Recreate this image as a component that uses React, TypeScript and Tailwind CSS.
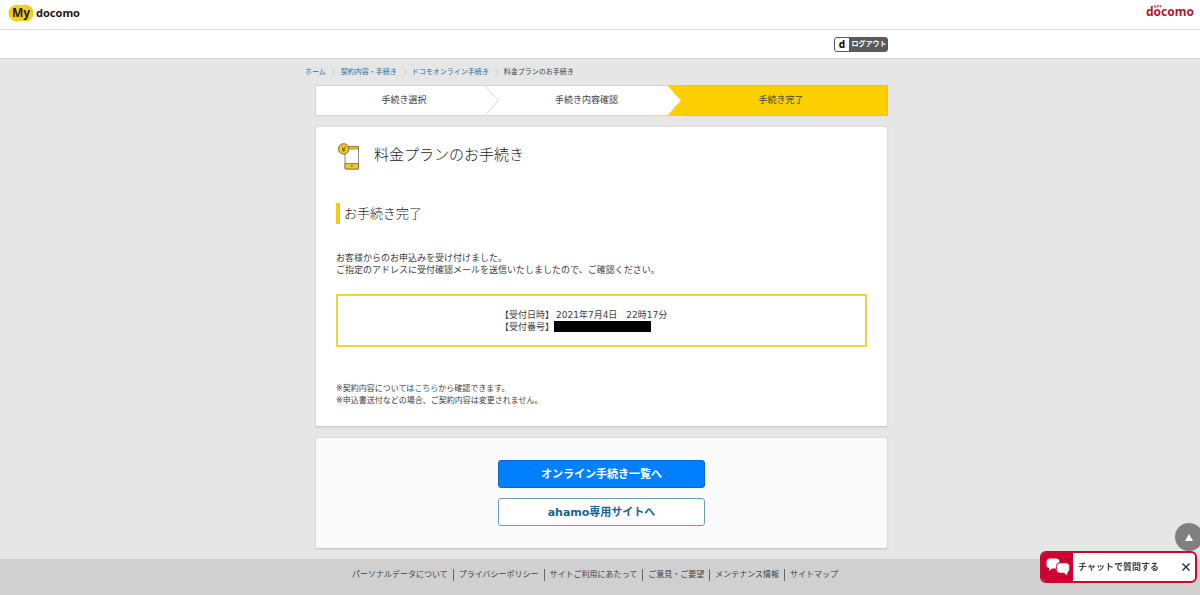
import type { ReactNode } from "react";

const breadcrumbs = ["ホーム", "契約内容・手続き", "ドコモオンライン手続き"];

const footerLinks = [
  "パーソナルデータについて",
  "プライバシーポリシー",
  "サイトご利用にあたって",
  "ご意見・ご要望",
  "メンテナンス情報",
  "サイトマップ",
];

export default function App() {
  return (
    <div className="flex min-h-screen flex-col overflow-x-hidden bg-[#e6e6e6] font-['DejaVu_Sans','Noto_Sans_CJK_JP',sans-serif] text-[#404040]">
      <SiteHeader />
      <main className="w-full grow pb-[10px] pl-[3px]">
        <div className="mx-auto max-w-[573px]">
          <Breadcrumb />
          <Steps />
          <ProcedureCard />
          <ActionCard />
        </div>
      </main>
      <SiteFooter />
      <FloatingTools />
    </div>
  );
}

function SiteHeader() {
  return (
    <header className="bg-white">
      <div className="flex h-[30px] items-start justify-between border-b border-[#dedede] pl-2 pr-[6px]">
        <a href="#" className="flex items-center pt-1 font-['Noto_Sans',sans-serif] font-bold text-[#231815]">
          <span className="relative flex h-[18px] w-[26px] items-center justify-center">
            <svg viewBox="0 0 26 18" className="absolute inset-0 h-full w-full" aria-hidden="true">
              <circle cx="9" cy="9" r="8.6" fill="#f5cc1c" />
              <circle cx="17" cy="9" r="8.6" fill="#f5cc1c" />
            </svg>
            <span className="relative text-xs leading-[18px]">My</span>
          </span>
          <span className="ml-[2px] text-[11px] leading-[18px]">docomo</span>
        </a>
        <a href="#" className="relative pt-1 font-['Noto_Sans',sans-serif] text-xs font-bold leading-4 text-[#b3162f]">
          <svg viewBox="0 0 8 3" className="absolute left-2 top-[5px] h-[3px] w-2" fill="none" stroke="#b3162f" strokeWidth="0.7" aria-hidden="true">
            <path d="M0.5 2.6V0.5L2 2.6V0.5M3 0.7H5M4 0.7V2.6M5.6 0.7H7.6M6.6 0.7V2.6" />
          </svg>
          docomo
        </a>
      </div>
      <div className="h-[29px] border-b border-[#d4d4d4] pl-[3px]">
        <div className="mx-auto flex max-w-[573px] justify-end pt-[7px]">
          <button type="button" className="flex h-[15px] w-[54px] items-center overflow-hidden rounded-[3px] border border-[#5a5a5a] bg-[#5a5a5a] text-[7px] font-bold leading-[15px] text-white">
            <span className="w-[14px] bg-white font-['Noto_Sans',sans-serif] text-[10px] leading-[13px] text-black">d</span>
            <span className="grow whitespace-nowrap pl-[2px]">ログアウト</span>
          </button>
        </div>
      </div>
    </header>
  );
}

function Breadcrumb() {
  return (
    <nav className="-ml-[10px] flex h-[26px] items-center gap-[5px] whitespace-nowrap text-[7px] leading-3">
      {breadcrumbs.map((label) => (
        <span key={label} className="flex items-center gap-[5px]">
          <a href="#" className="text-[#1a6fa5]">{label}</a>
          <svg viewBox="0 0 5 8" className="h-2 w-[5px]" fill="none" stroke="#c4c4c4" strokeWidth="0.8" aria-hidden="true">
            <path d="M1 0.5L4 4L1 7.5" />
          </svg>
        </span>
      ))}
      <span>料金プランのお手続き</span>
    </nav>
  );
}

function Steps() {
  return (
    <ol className="grid h-[31px] grid-cols-[177fr_182fr_214fr] text-center text-[9px] leading-[29px]">
      <li className="border-y border-l border-[#d4d4d4] bg-white">手続き選択</li>
      <li className="relative border-y border-[#d4d4d4] bg-white pl-[7px]">
        <svg viewBox="0 0 14 29" className="absolute -left-[7px] top-0 h-[29px] w-[14px]" fill="none" stroke="#d8d8d8" aria-hidden="true">
          <path d="M0 0L13.5 14.5L0 29" />
        </svg>
        手続き内容確認
      </li>
      <li className="relative border border-[#d9c14a] bg-[#fcd000]">
        <svg viewBox="0 0 15 31" className="absolute -left-2 -top-px h-[31px] w-[15px]" aria-hidden="true">
          <path d="M0 0H15V31H0L14 15.5Z" fill="#fcd000" />
          <path d="M0 1L14 15.5L0 30Z" fill="#fff" />
        </svg>
        手続き完了
      </li>
    </ol>
  );
}

function Card({ className, children }: { className: string; children: ReactNode }) {
  return (
    <section className={`mt-[10px] rounded-[3px] border border-[#dcdcdc] border-b-[#cacaca] shadow-xs ${className}`}>
      {children}
    </section>
  );
}

function ProcedureCard() {
  return (
    <Card className="bg-white px-5 pb-[19px] pt-4">
      <div className="flex items-start">
        <PlanIcon />
        <h1 className="ml-3 text-[15px] font-light leading-6 text-[#222]">料金プランのお手続き</h1>
      </div>
      <h2 className="mt-8 border-l-4 border-[#f2cb13] pl-1 text-[13px] font-light leading-[21px] text-[#222]">お手続き完了</h2>
      <p className="mt-7 text-[9px] leading-3">
        お客様からのお申込みを受け付けました。
        <br />
        ご指定のアドレスに受付確認メールを送信いたしましたので、ご確認ください。
      </p>
      <dl className="mt-[18px] flex h-[53px] flex-col justify-center border-2 border-[#ecd63f] pl-[162px] text-[9px] leading-3">
        <div className="flex">
          <dt className="w-[56px]">【受付日時】</dt>
          <dd>2021年7月4日　22時17分</dd>
        </div>
        <div className="flex items-start">
          <dt className="w-[54px]">【受付番号】</dt>
          <dd className="h-[11px] w-[97px] bg-black" />
        </div>
      </dl>
      <p className="mt-9 text-[8px] leading-3">
        ※契約内容については
        <a href="#" className="text-[#1a6fa5]">こちら</a>
        から確認できます。
        <br />
        ※申込書送付などの場合、ご契約内容は変更されません。
      </p>
    </Card>
  );
}

function PlanIcon() {
  return (
    <svg viewBox="0 0 26 28" className="h-7 w-[26px]" fill="none" stroke="#7d6a3a" aria-hidden="true">
      <path d="M9.2 3.5H21.5Q22.5 3.5 22.5 4.5V25Q22.5 26 21.5 26H10Q9 26 9 25V3.5Z" fill="#fff" stroke="#8a8a80" />
      <path d="M9 3.5H22.5V6H9Z" fill="#f0c81e" strokeWidth="0.7" />
      <path d="M9 20.5H22.5V26H9Z" fill="#f0c81e" strokeWidth="0.8" />
      <circle cx="15.8" cy="23" r="0.9" fill="#7d5a1a" stroke="none" />
      <circle cx="7.7" cy="5.9" r="5.2" fill="#f0c81e" />
      <path d="M5.8 3.3L7.7 5.9L9.6 3.3M7.7 5.9V8.7M6 6H9.4M6 7.3H9.4" stroke="#7d5a1a" strokeWidth="0.8" />
    </svg>
  );
}

function ActionCard() {
  return (
    <Card className="flex flex-col items-center gap-[10px] bg-[#fafafa] py-[22px] text-[11px] font-bold leading-6">
      <button type="button" className="h-7 w-[207px] rounded-[3px] border border-[#0a69cc] bg-[#0080ff] pt-[2px] text-white">
        オンライン手続き一覧へ
      </button>
      <button type="button" className="h-7 w-[207px] rounded-[3px] border border-[#6f9db5] bg-white pt-[2px] text-[#1a6391]">
        ahamo専用サイトへ
      </button>
    </Card>
  );
}

function SiteFooter() {
  return (
    <footer className="h-9 bg-[#d0d0d0] pr-[10px] pt-[10px]">
      <ul className="flex justify-center whitespace-nowrap text-[8px] leading-3">
        {footerLinks.map((label) => (
          <li key={label} className="border-r border-[#666] px-[5px] last:border-r-0">
            <a href="#">{label}</a>
          </li>
        ))}
      </ul>
    </footer>
  );
}

function FloatingTools() {
  return (
    <>
      <button type="button" aria-label="ページの先頭へ" className="fixed -right-[3px] bottom-[44px] flex h-7 w-7 items-center justify-center rounded-full bg-[#808080]">
        <svg viewBox="0 0 8 7" className="h-[7px] w-2" fill="#fff" aria-hidden="true">
          <path d="M4 0L8 7H0Z" />
        </svg>
      </button>
      <div className="fixed bottom-[12px] right-[3px] flex h-8 w-[157px] items-stretch overflow-hidden rounded-md border-2 border-[#c9082f] bg-white">
        <button type="button" className="flex grow items-center whitespace-nowrap text-[9px] font-bold">
          <span className="mr-[5px] flex h-full w-[31px] items-center justify-center bg-[#cc0033]">
            <svg viewBox="0 0 24 18" className="h-[18px] w-6" fill="#fff" aria-hidden="true">
              <path d="M4 0.5H10Q13.5 0.5 13.5 4V4.2Q10 5 10 8.5V10.5H6L3.2 13V10.3Q0.5 9.5 0.5 6.5V4Q0.5 0.5 4 0.5Z" />
              <path d="M14 5H20Q23.5 5 23.5 8.5V11Q23.5 14 21.5 14.8V17.8L18 15H14Q10.5 15 10.5 11.5V8.5Q10.5 5 14 5Z" stroke="#cc0033" strokeWidth="0.5" />
            </svg>
          </span>
          <span className="pt-[2px]">チャットで質問する</span>
        </button>
        <button type="button" aria-label="閉じる" className="flex w-[18px] items-center justify-center">
          <svg viewBox="0 0 8 8" className="h-2 w-2" fill="none" stroke="#222" strokeWidth="1.2" aria-hidden="true">
            <path d="M0.5 0.5L7.5 7.5M7.5 0.5L0.5 7.5" />
          </svg>
        </button>
      </div>
    </>
  );
}
